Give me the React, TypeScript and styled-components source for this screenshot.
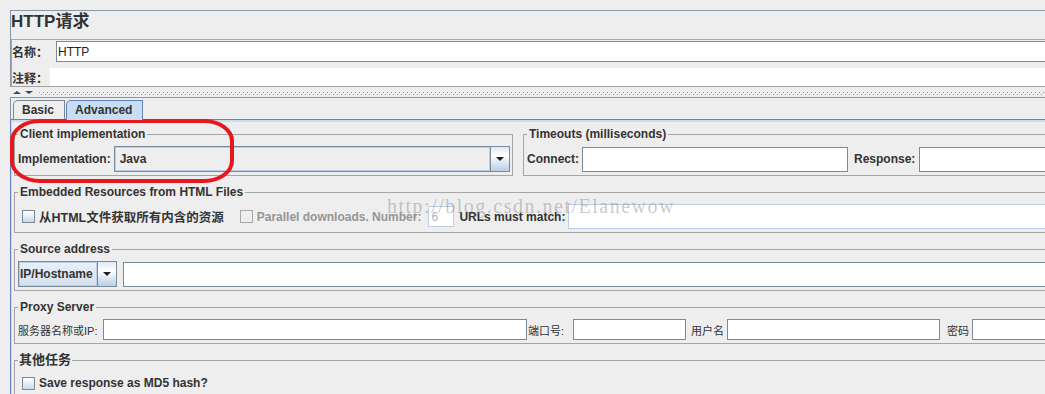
import React from 'react';
import styled, { createGlobalStyle } from 'styled-components';

const GlobalStyle = createGlobalStyle`
  html, body {
    margin: 0;
    padding: 0;
    background: #eeeeee;
    overflow: hidden;
  }

  body {
    font-family: "Liberation Sans", Arial, "Noto Sans CJK SC", sans-serif;
    font-size: 12px;
    color: #333333;
  }

  * {
    box-sizing: border-box;
  }
`;

const Page = styled.div`
  position: relative;
  width: 1200px;
  height: 394px;
  padding: 10px 0 0 10px;
  overflow: hidden;
`;

/* ---------- top: title / name / comment ---------- */

const Header = styled.div`
  border-top: 1px solid #8796a8;
  border-left: 1px solid #8796a8;
  border-bottom: 1px solid #a0a0a0;
`;

const TitleRow = styled.div`
  height: 29px;
  padding-top: 1px;
  line-height: 20px;
  border-bottom: 1px solid #a8a8a8;
  font-size: 17px;
  font-weight: bold;
  color: #333333;
`;

const InfoSection = styled.div`
  padding-top: 1px;
  border-left: 1px solid #a8a8a8;
`;

const InfoRow = styled.div<{ $h: number; $mt?: number }>`
  display: flex;
  align-items: center;
  height: ${(p) => p.$h}px;
  margin-top: ${(p) => p.$mt ?? 0}px;
`;

const InfoLabel = styled.span<{ $w: number }>`
  width: ${(p) => p.$w}px;
  flex: none;
  font-size: 12px;
  font-weight: bold;
  white-space: nowrap;
`;

const NameInput = styled.input`
  flex: 1;
  min-width: 0;
  height: 21px;
  margin: 0;
  padding: 0 0 0 1px;
  border: 1px solid #7a8a99;
  border-right: none;
  background: #ffffff;
  font-family: "Liberation Sans", Arial, sans-serif;
  font-size: 12px;
  color: #222222;
  outline: none;
`;

const CommentArea = styled.div`
  flex: 1;
  height: 18px;
  background: #ffffff;
`;

/* ---------- splitter ---------- */

const Splitter = styled.div`
  height: 10px;
  display: flex;
  align-items: center;
  padding-left: 3px;
`;

const SplitArrow = styled.span<{ $down?: boolean }>`
  width: 0;
  height: 0;
  margin-right: 4px;
  border-left: 4px solid transparent;
  border-right: 4px solid transparent;
  ${(p) => (p.$down ? 'border-top: 3px solid #34475f;' : 'border-bottom: 3px solid #34475f;')}
`;

const SplitDots = styled.div`
  flex: 1;
  height: 3px;
  margin: 3px 0 0 2px;
  background:
    repeating-linear-gradient(90deg, #9a9a9a 0 1px, transparent 1px 4px) 0 0 / 100% 1px no-repeat,
    repeating-linear-gradient(90deg, #9a9a9a 0 1px, transparent 1px 4px) 2px 2px / 100% 1px no-repeat;
`;

/* ---------- tabs ---------- */

const LowerPanel = styled.div`
  border-top: 1px solid #8796a8;
`;

const TabRow = styled.div`
  display: flex;
  align-items: flex-end;
  gap: 1px;
  padding: 2px 0 0 2px;
  border-left: 1px solid #8796a8;
`;

const Tab = styled.div<{ $active?: boolean }>`
  position: relative;
  z-index: 1;
  height: ${(p) => (p.$active ? 20 : 19)}px;
  margin-bottom: ${(p) => (p.$active ? -1 : 0)}px;
  display: flex;
  align-items: center;
  padding: 0 10px 1px 8px;
  border: 1px solid ${(p) => (p.$active ? '#6382bf' : '#7a8a99')};
  border-bottom: none;
  border-top-left-radius: 5px;
  background: ${(p) => (p.$active ? '#c8ddf2' : '#eeeeee')};
  font-size: 12px;
  font-weight: bold;
`;

const TabContent = styled.div`
  display: flex;
  flex-direction: column;
  align-items: stretch;
  gap: 9px;
  padding: 7px 0 0 3px;
  border-top: 1px solid #6382bf;
  border-left: 1px solid #6382bf;
  box-shadow: inset 1px 2px 0 #c8ddf2;
  height: 300px;
`;

/* ---------- titled groups ---------- */

const GroupLine = styled.div`
  display: flex;
  gap: 10px;
`;

const Group = styled.fieldset<{ $w?: number; $grow?: boolean }>`
  margin: 0;
  min-width: 0;
  padding: 5px 2px 3px 3px;
  border: 1px solid #a5a5a5;
  flex: ${(p) => (p.$grow ? '1 1 0' : 'none')};
  ${(p) => (p.$w ? `width: ${p.$w}px;` : '')}
`;

const GroupTitle = styled.legend<{ $cjk?: boolean }>`
  padding: 0 ${(p) => (p.$cjk ? 1 : 2)}px;
  font-size: ${(p) => (p.$cjk ? 13 : 12)}px;
  line-height: 14px;
  font-weight: bold;
  color: #333333;
`;

const Row = styled.div<{ $h: number; $pl?: number }>`
  display: flex;
  align-items: center;
  height: ${(p) => p.$h}px;
  padding-left: ${(p) => p.$pl ?? 0}px;
`;

const Label = styled.span<{ $muted?: boolean; $cjk?: boolean; $ml?: number; $mr?: number }>`
  flex: none;
  margin-left: ${(p) => p.$ml ?? 0}px;
  margin-right: ${(p) => p.$mr ?? 0}px;
  font-size: ${(p) => (p.$cjk ? 12.5 : 12)}px;
  font-weight: bold;
  white-space: nowrap;
  color: ${(p) => (p.$muted ? '#959595' : '#333333')};
`;

const SmallLabel = styled.span<{ $w: number; $pl?: number }>`
  flex: none;
  width: ${(p) => p.$w}px;
  padding-left: ${(p) => p.$pl ?? 0}px;
  font-size: 11px;
  white-space: nowrap;
  color: #333333;
`;

const Field = styled.input<{ $w?: number; $h: number; $off?: boolean }>`
  ${(p) => (p.$w ? `width: ${p.$w}px; flex: none;` : 'flex: 1; min-width: 0;')}
  height: ${(p) => p.$h}px;
  margin: 0;
  padding: 0 0 0 2px;
  border: 1px solid ${(p) => (p.$off ? '#b8cfe5' : '#7a8a99')};
  background: #ffffff;
  font-family: "Liberation Sans", Arial, sans-serif;
  font-size: 12px;
  color: ${(p) => (p.$off ? '#a3b8cc' : '#222222')};
  outline: none;
`;

const Check = styled.span<{ $off?: boolean }>`
  flex: none;
  width: 13px;
  height: 13px;
  margin-right: 4px;
  border: 1px solid ${(p) => (p.$off ? '#a8a8a8' : '#7a8a99')};
  background: ${(p) => (p.$off ? '#eeeeee' : 'linear-gradient(#ffffff, #e4ecf5 55%, #c9d9ea)')};
`;

/* ---------- combo box ---------- */

const Combo = styled.div<{ $w?: number; $ml?: number }>`
  display: flex;
  height: 26px;
  margin-left: ${(p) => p.$ml ?? 0}px;
  ${(p) => (p.$w ? `width: ${p.$w}px; flex: none;` : 'flex: 1;')}
  border: 1px solid #7a8a99;
`;

const ComboValue = styled.div<{ $tinted?: boolean; $pad: number }>`
  flex: 1;
  display: flex;
  align-items: center;
  padding-left: ${(p) => p.$pad}px;
  font-size: 12px;
  font-weight: bold;
  color: #333333;
  background: ${(p) => (p.$tinted ? 'linear-gradient(#e9f0f7, #d3e1ef)' : '#eeeeee')};
  box-shadow: inset 0 0 0 1px #b8cfe5;
`;

const ComboButton = styled.div`
  width: 19px;
  flex: none;
  display: flex;
  align-items: center;
  justify-content: center;
  border-left: 1px solid #7a8a99;
  background: linear-gradient(#dde8f3, #ffffff 35%, #b8cfe5);

  &::after {
    content: '';
    border-left: 4px solid transparent;
    border-right: 4px solid transparent;
    border-top: 4px solid #1e1e1e;
  }
`;

/* ---------- overlays ---------- */

const RedMark = styled.div`
  position: absolute;
  left: 10px;
  top: 119px;
  width: 224px;
  height: 64px;
  border: 4px solid #e8161d;
  border-radius: 30px / 22px;
  pointer-events: none;
`;

const Watermark = styled.div`
  position: absolute;
  left: 387px;
  top: 195px;
  font-family: "Liberation Serif", "DejaVu Serif", serif;
  font-size: 20px;
  letter-spacing: 1.5px;
  white-space: nowrap;
  color: rgba(120, 120, 120, 0.4);
  pointer-events: none;
`;

export default function App() {
  return (
    <>
      <GlobalStyle />
      <Page>
        <Header>
          <TitleRow>HTTP请求</TitleRow>
          <InfoSection>
            <InfoRow $h={21}>
              <InfoLabel $w={44}>名称：</InfoLabel>
              <NameInput defaultValue="HTTP" />
            </InfoRow>
            <InfoRow $h={18} $mt={6}>
              <InfoLabel $w={38}>注释：</InfoLabel>
              <CommentArea />
            </InfoRow>
          </InfoSection>
        </Header>

        <Splitter>
          <SplitArrow />
          <SplitArrow $down />
          <SplitDots />
        </Splitter>

        <LowerPanel>
          <TabRow>
            <Tab>Basic</Tab>
            <Tab $active>Advanced</Tab>
          </TabRow>

          <TabContent>
            <GroupLine>
              <Group $w={499}>
                <GroupTitle>Client implementation</GroupTitle>
                <Row $h={26}>
                  <Label>Implementation:</Label>
                  <Combo $ml={3}>
                    <ComboValue $pad={5}>Java</ComboValue>
                    <ComboButton />
                  </Combo>
                </Row>
              </Group>
              <Group $grow>
                <GroupTitle>Timeouts (milliseconds)</GroupTitle>
                <Row $h={26}>
                  <Label $mr={3}>Connect:</Label>
                  <Field $w={266} $h={25} />
                  <Label $ml={6} $mr={4}>Response:</Label>
                  <Field $h={25} />
                </Row>
              </Group>
            </GroupLine>

            <Group>
              <GroupTitle>Embedded Resources from HTML Files</GroupTitle>
              <Row $h={25} $pl={4}>
                <Check />
                <Label $cjk>从HTML文件获取所有内含的资源</Label>
                <Check $off style={{ marginLeft: 16 }} />
                <Label $muted>Parallel downloads. Number:</Label>
                <Field $w={26} $h={21} $off defaultValue="6" style={{ marginLeft: 7 }} />
                <Label $ml={5} $mr={3}>URLs must match:</Label>
                <Field $h={25} $off />
              </Row>
            </Group>

            <Group>
              <GroupTitle>Source address</GroupTitle>
              <Row $h={26}>
                <Combo $w={99}>
                  <ComboValue $tinted $pad={1}>IP/Hostname</ComboValue>
                  <ComboButton />
                </Combo>
                <Field $h={25} style={{ marginLeft: 6 }} />
              </Row>
            </Group>

            <Group>
              <GroupTitle>Proxy Server</GroupTitle>
              <Row $h={21}>
                <SmallLabel $w={85}>服务器名称或IP:</SmallLabel>
                <Field $w={424} $h={21} />
                <SmallLabel $w={46} $pl={1}>端口号:</SmallLabel>
                <Field $w={113} $h={21} />
                <SmallLabel $w={41} $pl={5}>用户名</SmallLabel>
                <Field $w={213} $h={21} />
                <SmallLabel $w={32} $pl={7}>密码</SmallLabel>
                <Field $h={21} />
              </Row>
            </Group>

            <Group>
              <GroupTitle $cjk>其他任务</GroupTitle>
              <Row $h={22} $pl={4}>
                <Check />
                <Label>Save response as MD5 hash?</Label>
              </Row>
            </Group>
          </TabContent>
        </LowerPanel>

        <Watermark>http://blog.csdn.net/Elanewow</Watermark>
        <RedMark />
      </Page>
    </>
  );
}
